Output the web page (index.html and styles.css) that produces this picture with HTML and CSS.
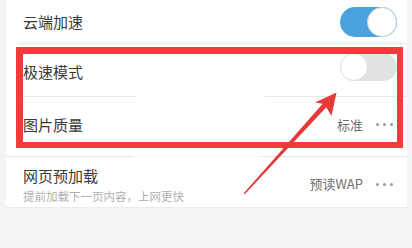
FILE: index.html
```html
<!DOCTYPE html>
<html lang="zh">
<head>
<meta charset="utf-8">
<link rel="stylesheet" href="styles.css">
</head>
<body>
<div class="page">
  <div class="card">
    <div class="row row-first">
      <span class="label">云端加速</span>
      <span class="toggle on"><span class="knob"></span></span>
    </div>
    <div class="divider"></div>
    <div class="row row-second">
      <span class="label">极速模式</span>
      <span class="toggle off"><span class="knob"></span></span>
    </div>
    <div class="divider gap"></div>
    <div class="row row-third">
      <span class="label">图片质量</span>
      <span class="value">标准<span class="dots"><i></i><i></i><i></i></span></span>
    </div>
  </div>
  <div class="separator"></div>
  <div class="card card-two">
    <div class="row row-fourth">
      <div class="stack">
        <span class="label">网页预加载</span>
        <span class="sub">提前加载下一页内容，上网更快</span>
      </div>
      <span class="value value-low">预读WAP<span class="dots"><i></i><i></i><i></i></span></span>
    </div>
  </div>
  <div class="highlight"></div>
  <svg class="arrow" width="412" height="248" viewBox="0 0 412 248">
    <polygon points="243.5,193.5 322.7,103.8 315,102.5 336.5,92.5 331.5,116 326.3,107.2 245,194" fill="#e63a3a"/>
  </svg>
</div>
</body>
</html>
```
FILE: styles.css
```css
html, body {
  margin: 0;
  padding: 0;
}
body {
  width: 412px;
  height: 248px;
  overflow: hidden;
  background: #f4f4f4;
  font-family: "Noto Sans CJK SC", "Noto Sans", sans-serif;
}
.page {
  position: relative;
  width: 412px;
  height: 248px;
  padding: 0 5px 0 6px;
  box-sizing: border-box;
}
.card {
  background: #ffffff;
  padding-bottom: 6px;
}
.card-two {
  padding-bottom: 0;
  border-bottom: 1px solid #ececec;
}
.row {
  display: flex;
  align-items: center;
  justify-content: space-between;
  padding: 0 10px 0 17px;
}
.row-first {
  height: 43px;
}
.row-second {
  height: 52px;
}
.row-second .label {
  padding-top: 4px;
}
.row-second .toggle {
  margin-bottom: 6px;
}
.row-third {
  height: 53px;
  padding-right: 14px;
}
.row-third .label,
.row-third .value {
  padding-top: 2px;
}
.row-fourth {
  height: 50px;
  padding-right: 14px;
}
.label {
  font-size: 15px;
  line-height: 20px;
  color: #3a3a3a;
}
.stack {
  display: flex;
  flex-direction: column;
  padding-top: 6px;
}
.sub {
  font-size: 11.5px;
  line-height: 16px;
  color: #b0b0b0;
  margin-top: 2px;
}
.value {
  display: flex;
  align-items: center;
  font-size: 13px;
  line-height: 18px;
  color: #707070;
}
.value-low {
  padding-top: 4px;
}
.dots {
  display: flex;
  gap: 4px;
  margin-left: 13px;
}
.dots i {
  display: block;
  width: 3px;
  height: 3px;
  border-radius: 50%;
  background: #9a9a9a;
}
.divider {
  height: 1px;
  margin-left: 14px;
  background: #ececec;
}
.divider.gap {
  margin-left: 10px;
  background: linear-gradient(to right, #e8e8e8 0, #e8e8e8 118px, transparent 124px, transparent 246px, #e8e8e8 252px);
}
.separator {
  height: 1px;
  background: linear-gradient(to right, #e4e4e4 0, #e4e4e4 126px, #f6f6f6 128px, #f6f6f6 255px, #e4e4e4 257px);
}
.toggle {
  position: relative;
  display: block;
  width: 57px;
  height: 30px;
  border-radius: 15px;
  box-sizing: border-box;
}
.toggle.on {
  background: #4aa3df;
}
.toggle.off {
  background: #e2e2e2;
  width: 57px;
  height: 28px;
}
.knob {
  position: absolute;
  top: 0;
  width: 30px;
  height: 30px;
  border-radius: 50%;
  background: #ffffff;
  box-sizing: border-box;
  border: 1.5px solid #c9d6df;
}
.toggle.on .knob {
  right: 0;
}
.toggle.off .knob {
  left: 0;
  width: 28px;
  height: 28px;
  border-color: #e0e0e0;
}
.highlight {
  position: absolute;
  left: 16px;
  top: 47px;
  width: 387px;
  height: 101px;
  box-sizing: border-box;
  border-style: solid;
  border-color: #f43b3b;
  border-width: 7px 6px 6px 7px;
}
.arrow {
  position: absolute;
  left: 0;
  top: 0;
}
```
